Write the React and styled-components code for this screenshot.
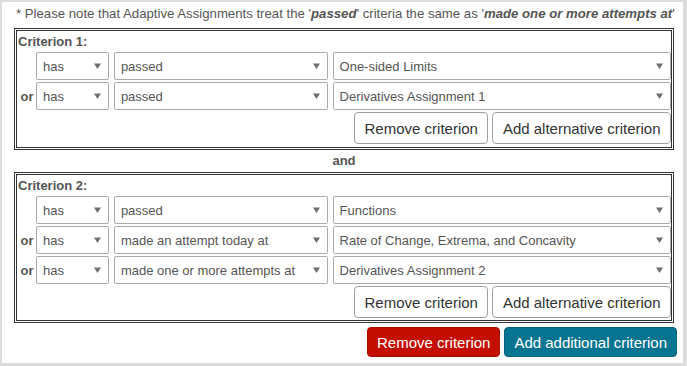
import React from "react";
import styled, { createGlobalStyle } from "styled-components";

const Global = createGlobalStyle`
  html, body { margin: 0; padding: 0; background: #dcdcdc; }
  body { font-family: "Liberation Sans", Arial, sans-serif; }
  #root { box-sizing: border-box; width: 687px; height: 366px; padding: 2px 4px 3px 2px; }
`;

const Panel = styled.div`
  box-sizing: border-box;
  height: 100%;
  background: #fff;
  padding: 2px 6px 0 12px;
  color: #555;
`;

const Note = styled.div`
  font-size: 13.2px;
  line-height: 20px;
  padding-left: 2px;
  margin-bottom: 4px;
  white-space: nowrap;
  b { font-style: italic; font-weight: bold; }
`;

const Box = styled.div`
  box-sizing: border-box;
  width: 660px;
  border: 3px double #333;
  padding: 0 0 ${(p) => p.$pb}px 1px;
`;

const BoxTitle = styled.div`
  font-size: 13px;
  font-weight: bold;
  line-height: 21px;
`;

const Rows = styled.div`
  display: flex;
  flex-direction: column;
  gap: 2px;
`;

const Row = styled.div`
  display: flex;
  align-items: center;
  gap: 5px;
`;

const OrCell = styled.div`
  width: 18px;
  margin-right: -5px;
  font-size: 13px;
  font-weight: bold;
  text-align: center;
`;

const Select = styled.div`
  box-sizing: border-box;
  width: ${(p) => p.$w}px;
  height: 28px;
  border: 1px solid #ababab;
  border-radius: 2px;
  background: #fff;
  display: flex;
  align-items: center;
  justify-content: space-between;
  padding: 0 7px 0 6px;
  font-size: 13px;
  color: #555;
  white-space: nowrap;
`;

const Arrow = () => (
  <svg width="7" height="6" viewBox="0 0 7 6">
    <path d="M0 0.5 H7 L3.5 6 Z" fill="#6f6f6f" />
  </svg>
);

const Actions = styled.div`
  display: flex;
  justify-content: flex-end;
  gap: 4px;
`;

const Button = styled.button`
  box-sizing: border-box;
  height: ${(p) => (p.$variant ? 30 : 32)}px;
  padding: 0 ${(p) => (p.$variant ? 9 : 9.5)}px;
  font-family: "Liberation Sans", Arial, sans-serif;
  font-size: 15px;
  border-radius: 4px;
  cursor: pointer;
  border: 1px solid
    ${(p) => (p.$variant === "danger" ? "#a80e00" : p.$variant === "primary" ? "#05627a" : "#a0a0a0")};
  background: ${(p) => (p.$variant === "danger" ? "#c40f00" : p.$variant === "primary" ? "#057490" : "#fff")};
  color: ${(p) => (p.$variant ? "#fff" : "#333")};
`;

const And = styled.div`
  width: 660px;
  text-align: center;
  font-size: 13px;
  font-weight: bold;
  line-height: 22px;
`;

const Footer = styled.div`
  display: flex;
  justify-content: flex-end;
  gap: 4px;
  margin-top: 4px;
`;

const criteria = [
  {
    title: "Criterion 1:",
    pb: 3,
    rows: [
      ["has", "passed", "One-sided Limits"],
      ["has", "passed", "Derivatives Assignment 1"],
    ],
  },
  {
    title: "Criterion 2:",
    pb: 2,
    rows: [
      ["has", "passed", "Functions"],
      ["has", "made an attempt today at", "Rate of Change, Extrema, and Concavity"],
      ["has", "made one or more attempts at", "Derivatives Assignment 2"],
    ],
  },
];

function Criterion({ c }) {
  return (
    <Box $pb={c.pb}>
      <BoxTitle>{c.title}</BoxTitle>
      <Rows>
        {c.rows.map((r, i) => (
          <Row key={i}>
            <OrCell>{i > 0 ? "or" : ""}</OrCell>
            <Select $w={73}>
              <span>{r[0]}</span>
              <Arrow />
            </Select>
            <Select $w={214}>
              <span>{r[1]}</span>
              <Arrow />
            </Select>
            <Select $w={339}>
              <span>{r[2]}</span>
              <Arrow />
            </Select>
          </Row>
        ))}
        <Actions>
          <Button>Remove criterion</Button>
          <Button>Add alternative criterion</Button>
        </Actions>
      </Rows>
    </Box>
  );
}

export default function App() {
  return (
    <>
      <Global />
      <Panel>
        <Note>
          * Please note that Adaptive Assignments treat the '<b>passed</b>' criteria the same as '
          <b>made one or more attempts at</b>'
        </Note>
        <Criterion c={criteria[0]} />
        <And>and</And>
        <Criterion c={criteria[1]} />
        <Footer>
          <Button $variant="danger">Remove criterion</Button>
          <Button $variant="primary">Add additional criterion</Button>
        </Footer>
      </Panel>
    </>
  );
}
